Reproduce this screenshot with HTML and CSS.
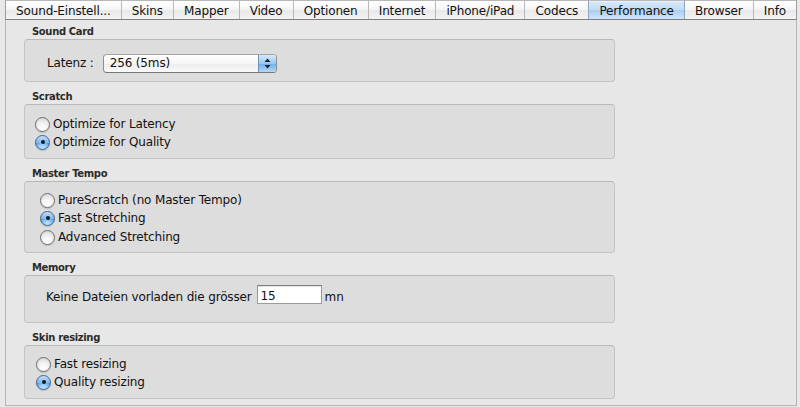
FILE: index.html
```html
<!DOCTYPE html>
<html lang="de">
<head>
<meta charset="utf-8">
<title>Einstellungen – Performance</title>
<link rel="stylesheet" href="styles.css">
</head>
<body>
<div class="prefs">
  <nav class="tabs">
    <span class="tab tab-first">Sound-Einstell...</span>
    <span class="tab">Skins</span>
    <span class="tab">Mapper</span>
    <span class="tab">Video</span>
    <span class="tab">Optionen</span>
    <span class="tab">Internet</span>
    <span class="tab">iPhone/iPad</span>
    <span class="tab">Codecs</span>
    <span class="tab tab-active">Performance</span>
    <span class="tab">Browser</span>
    <span class="tab tab-last">Info</span>
  </nav>

  <main class="panel">
    <section class="group">
      <h3 class="group-title">Sound Card</h3>
      <div class="box box-sound">
        <span class="field-label">Latenz :</span>
        <span class="popup">
          <span class="popup-value">256 (5ms)</span>
          <span class="popup-stepper">
            <svg width="7" height="11" viewBox="0 0 7 11"><path d="M3.5 0.5 L6.5 4 L0.5 4 Z M0.5 7 L6.5 7 L3.5 10.5 Z" fill="#1c2430"/></svg>
          </span>
        </span>
      </div>
    </section>

    <section class="group">
      <h3 class="group-title">Scratch</h3>
      <div class="box box-radios box-scratch">
        <label class="radio-row"><span class="radio"></span>Optimize for Latency</label>
        <label class="radio-row"><span class="radio radio-on"></span>Optimize for Quality</label>
      </div>
    </section>

    <section class="group">
      <h3 class="group-title">Master Tempo</h3>
      <div class="box box-radios box-tempo">
        <label class="radio-row"><span class="radio"></span>PureScratch (no Master Tempo)</label>
        <label class="radio-row"><span class="radio radio-on"></span>Fast Stretching</label>
        <label class="radio-row"><span class="radio"></span>Advanced Stretching</label>
      </div>
    </section>

    <section class="group">
      <h3 class="group-title">Memory</h3>
      <div class="box box-memory">
        <span class="field-label">Keine Dateien vorladen die grösser</span>
        <span class="textfield">15</span>
        <span class="unit">mn</span>
      </div>
    </section>

    <section class="group">
      <h3 class="group-title">Skin resizing</h3>
      <div class="box box-radios box-skin">
        <label class="radio-row"><span class="radio"></span>Fast resizing</label>
        <label class="radio-row"><span class="radio radio-on"></span>Quality resizing</label>
      </div>
    </section>
  </main>
</div>
</body>
</html>
```

FILE: styles.css
```css
* { box-sizing: border-box; }

html, body {
  margin: 0;
  height: 407px;
  overflow: hidden;
  background: #e8e8e8;
}

body {
  font-family: "DejaVu Sans", "Liberation Sans", sans-serif;
  font-size: 12px;
  letter-spacing: -0.15px;
  color: #111;
}

.prefs {
  display: flex;
  flex-direction: column;
  height: 406px;
  padding: 0 3px 0 5px;
}

/* segmented tab strip */
.tabs {
  display: flex;
  height: 20px;
  border: 1px solid #9c9c9c;
  border-top-color: #b8b8b8;
  border-bottom-color: #7f7f7f;
  background: linear-gradient(#ffffff, #f4f4f4 50%, #e9e9e9 51%, #f3f3f3);
  position: relative;
  z-index: 1;
}

.tab {
  flex: 1 1 auto;
  display: flex;
  align-items: center;
  justify-content: center;
  padding: 1px 4px 0;
  white-space: nowrap;
  border-left: 1px solid #b9b9b9;
  color: #111;
}

.tab-first {
  border-left: none;
  border-radius: 5px 0 0 5px;
}

.tab-active {
  background: linear-gradient(#d9eafa, #c2dcf5 50%, #a9cdf0 51%, #cfe5fa);
  border-left-color: #8aa7c6;
  box-shadow: inset 0 1px 0 #e9f3fd;
}

.tab-active + .tab { border-left-color: #8aa7c6; }

/* content panel below the tabs */
.panel {
  flex: 1;
  margin-top: -1px;
  border: 1px solid #b4b4b4;
  border-top: none;
  background: #e7e7e7;
  padding: 6px 0 0 18px;
  display: flex;
  flex-direction: column;
  gap: 8px;
}

.group { width: 591px; }

.group-title {
  margin: 0;
  padding-left: 8px;
  font-size: 10px;
  font-weight: bold;
  letter-spacing: -0.35px;
  line-height: 14px;
  color: #2b2b2b;
}

.box {
  border: 1px solid #c4c4c4;
  border-top-color: #b8b8b8;
  border-radius: 4px;
  background: #dddddd;
}

.box-sound {
  height: 43px;
  display: flex;
  align-items: flex-start;
  padding: 14px 0 0 22px;
}

.field-label { margin-right: 9px; line-height: 19px; }

.popup {
  display: flex;
  align-items: stretch;
  width: 174px;
  height: 19px;
  border: 1px solid #8e8e8e;
  border-top-color: #a4a4a4;
  border-bottom-color: #777;
  border-radius: 4px;
  background: linear-gradient(#ffffff, #f6f6f6 50%, #ececec 51%, #fafafa);
  overflow: hidden;
}

.popup-value {
  flex: 1;
  padding-left: 6px;
  line-height: 17px;
}

.popup-stepper {
  width: 18px;
  display: flex;
  align-items: center;
  justify-content: center;
  border-left: 1px solid #6f8fb4;
  background: linear-gradient(#d7e9fb, #9ac6f1 50%, #6fadeb 51%, #b3d8fb);
}

/* radio lists */
.box-radios {
  display: flex;
  flex-direction: column;
  height: 55px;
  padding: 9px 0 0 10px;
}

.box-scratch { padding-top: 10px; }
.box-tempo { height: 72px; padding-left: 15px; }
.box-skin { height: 54px; padding-left: 11px; }

.radio-row {
  display: flex;
  align-items: center;
  height: 18px;
  gap: 3px;
}

.box-tempo .radio-row:nth-child(3) { margin-top: 1px; }

.radio {
  width: 15px;
  height: 15px;
  flex: none;
  border-radius: 50%;
  border: 1px solid #6e6e6e;
  background: radial-gradient(circle at 50% 80%, #ffffff 0, #f2f2f2 45%, #cfcfcf 100%);
  box-shadow: 0 1px 1px rgba(0,0,0,0.15);
  position: relative;
}

.radio-on {
  border-color: #44628c;
  background:
    radial-gradient(circle at 50% 85%, #b9e1ff 0, rgba(185,225,255,0) 55%),
    linear-gradient(#c7e0f8, #7fb6ec 50%, #4c95e0 55%, #92c9fa);
}

.radio-on::after {
  content: "";
  position: absolute;
  left: 4.5px;
  top: 4.5px;
  width: 4px;
  height: 4px;
  border-radius: 50%;
  background: #111b28;
}

/* memory row */
.box-memory {
  height: 48px;
  display: flex;
  align-items: flex-start;
  padding: 9px 0 0 21px;
}

.box-memory .field-label { margin-right: 5px; padding-top: 3px; }

.textfield {
  width: 65px;
  height: 19px;
  border: 1px solid #9a9a9a;
  border-top-color: #7d7d7d;
  background: #ffffff;
  padding: 3px 0 0 3px;
  line-height: 14px;
  box-shadow: inset 0 1px 1px rgba(0,0,0,0.12);
}

.unit { margin-left: 3px; line-height: 19px; padding-top: 3px; }
```
